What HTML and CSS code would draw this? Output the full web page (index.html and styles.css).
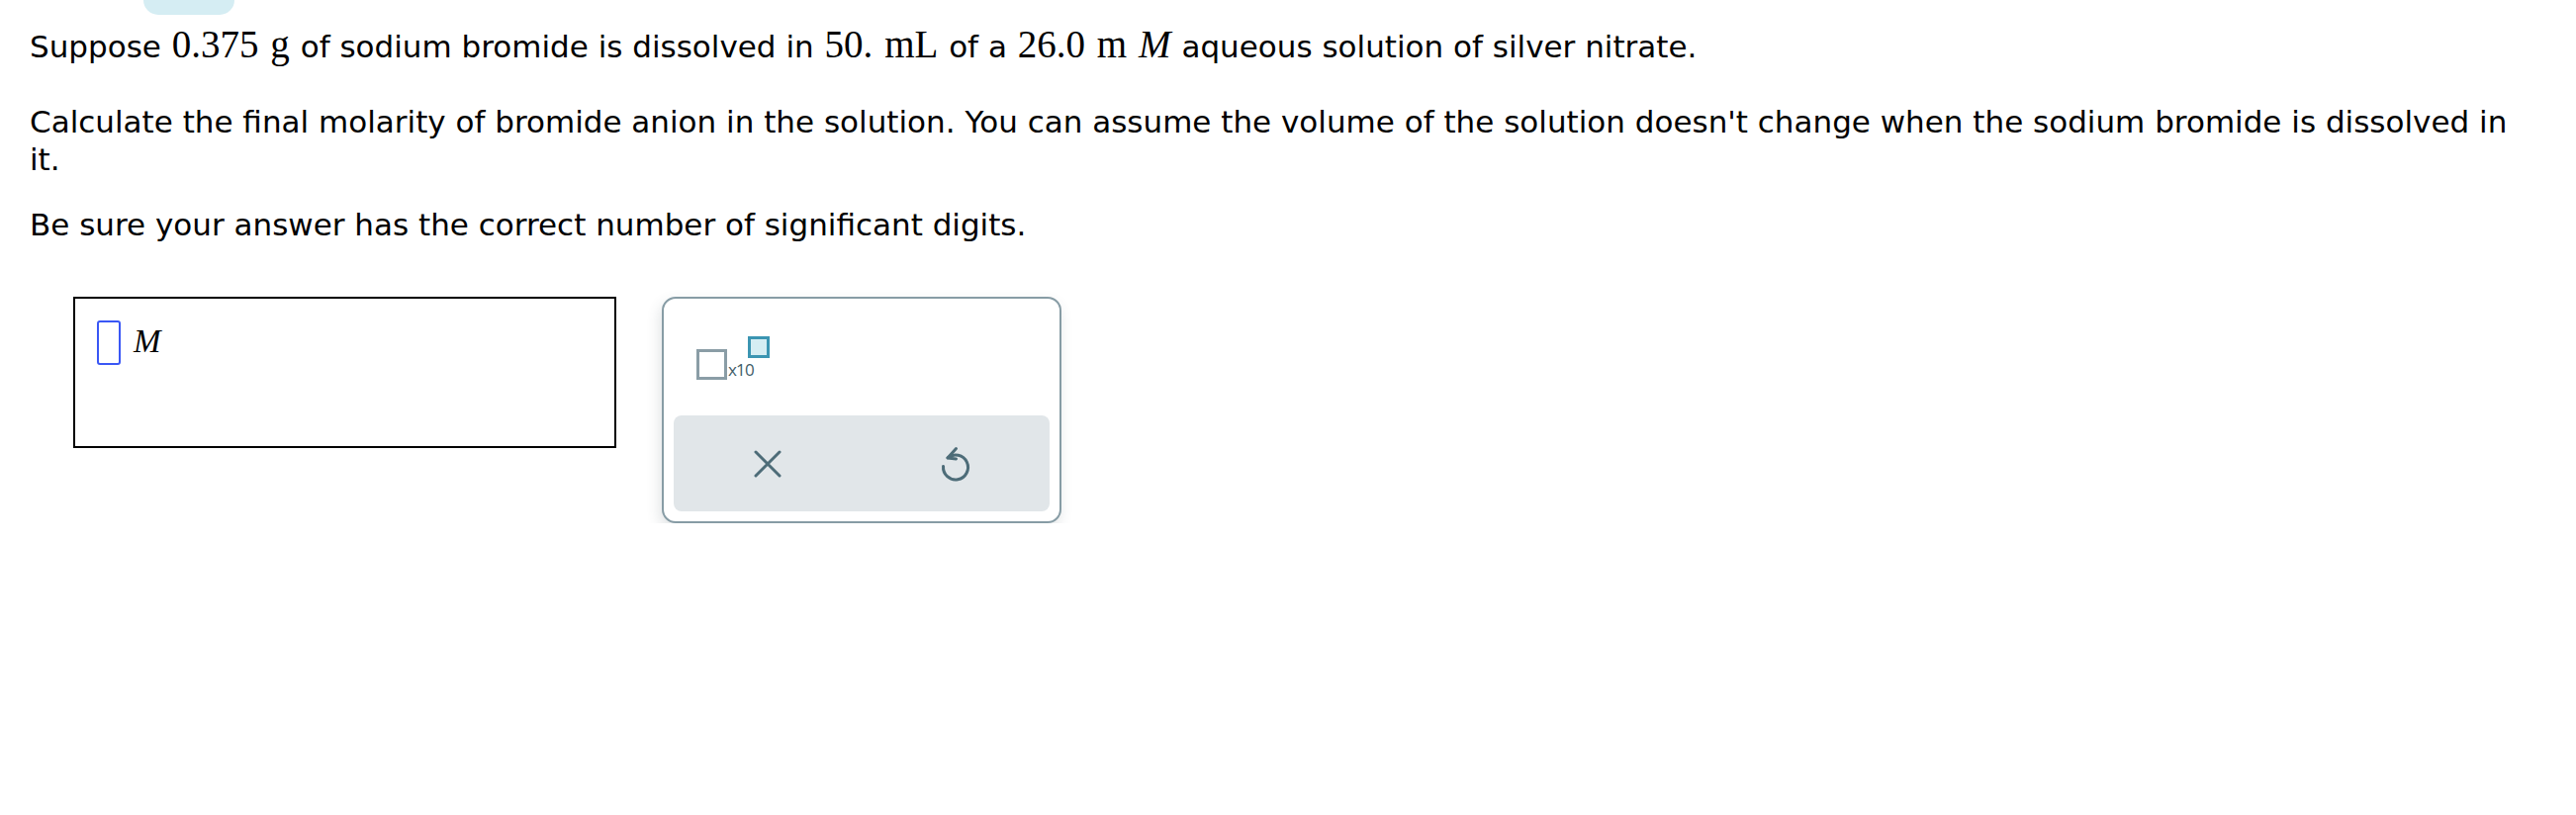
FILE: index.html
```html
<!DOCTYPE html>
<html lang="en">
<head>
<meta charset="utf-8">
<title>Question</title>
<link rel="stylesheet" href="styles.css">
</head>
<body>
<div class="page">
  <div class="tab"></div>
  <div class="question">
    <p class="first">Suppose <span class="math num">0.375</span> <span class="math">g</span> of sodium bromide is dissolved in <span class="math num">50.</span> <span class="math">mL</span> of a <span class="math num">26.0</span> <span class="math">m</span> <span class="math it">M</span> aqueous solution of silver nitrate.</p>
    <p>Calculate the final molarity of bromide anion in the solution. You can assume the volume of the solution doesn't change when the sodium bromide is dissolved in it.</p>
    <p>Be sure your answer has the correct number of significant digits.</p>
  </div>
  <div class="answer-row">
    <div class="answer-box">
      <span class="cursor"></span><span class="unit-var">M</span>
    </div>
    <div class="keypad">
      <div class="keys">
        <button class="sci-key" type="button">
          <span class="sq"></span><span class="x10">x10</span><span class="sup"></span>
        </button>
      </div>
      <div class="actions">
        <button class="act" type="button" aria-label="Clear">
          <svg width="30" height="30" viewBox="0 0 30 30"><path d="M3 3 L27 27 M27 3 L3 27" fill="none" stroke="#4d6c78" stroke-width="3" stroke-linecap="round"/></svg>
        </button>
        <button class="act" type="button" aria-label="Undo">
          <svg width="32" height="38" viewBox="0 0 32 38"><path d="M7.96 12.9 A12.5 12.5 0 1 1 3.55 21.4" fill="none" stroke="#4d6c78" stroke-width="3" stroke-linecap="round"/><path d="M16.5 3.6 L7.96 12.9 L16.5 13.9" fill="none" stroke="#4d6c78" stroke-width="3" stroke-linecap="round" stroke-linejoin="round"/></svg>
        </button>
      </div>
    </div>
  </div>
</div>
</body>
</html>
```
FILE: styles.css
```css
html, body {
  margin: 0;
  padding: 0;
  background: #ffffff;
}

.page {
  font-family: "DejaVu Sans", Verdana, sans-serif;
  font-size: 31px;
  color: #000000;
  padding: 0 50px 0 30px;
}

.tab {
  width: 92px;
  height: 15px;
  margin-left: 115px;
  background: #d5edf3;
  border-radius: 0 0 16px 16px;
}

.question p {
  margin: 0 0 28px 0;
  line-height: 38px;
}

.question p.first {
  margin-top: 11px;
  margin-bottom: 38px;
}

.math {
  font-family: "Liberation Serif", "Times New Roman", serif;
  font-size: 39px;
  margin: 0 1px;
}

.math.it {
  font-style: italic;
}

.answer-row {
  display: flex;
  align-items: flex-start;
  gap: 46px;
  margin-top: 54px;
  padding-left: 44px;
}

.answer-box {
  box-sizing: border-box;
  width: 549px;
  height: 153px;
  border: 2px solid #000000;
  padding: 22px 22px;
  display: flex;
  align-items: flex-start;
  gap: 13px;
}

.cursor {
  box-sizing: border-box;
  width: 24px;
  height: 45px;
  border: 2px solid #3a57f5;
  border-radius: 3px;
}

.unit-var {
  font-family: "Liberation Serif", "Times New Roman", serif;
  font-style: italic;
  font-size: 33px;
  line-height: 1;
  margin-top: 5px;
}

.keypad {
  box-sizing: border-box;
  width: 404px;
  height: 229px;
  border: 2px solid #879ca5;
  border-radius: 14px;
  padding: 10px;
  background: #ffffff;
  box-shadow: -2px 6px 14px rgba(60, 80, 90, 0.16);
  display: flex;
  flex-direction: column;
}

.keys {
  flex: 1;
  display: flex;
  align-items: flex-start;
  padding: 27px 0 0 23px;
}

.sci-key {
  border: 0;
  background: none;
  padding: 0;
  display: flex;
  align-items: flex-end;
  position: relative;
  width: 80px;
  height: 45px;
}

.sq {
  box-sizing: border-box;
  width: 31px;
  height: 31px;
  border: 3px solid #8a9da6;
}

.x10 {
  font-family: "Open Sans", "DejaVu Sans", sans-serif;
  font-size: 17px;
  color: #3f5c68;
  line-height: 1;
  margin-left: 1px;
  margin-bottom: 2px;
  letter-spacing: -0.8px;
}

.sup {
  position: absolute;
  left: 52px;
  top: 1px;
  box-sizing: border-box;
  width: 22px;
  height: 22px;
  border: 3px solid #3b95b2;
  background: #d5edf3;
}

.actions {
  height: 97px;
  background: #e1e6e9;
  border-radius: 8px;
  display: flex;
}

.act {
  flex: 1;
  border: 0;
  background: none;
  padding: 0;
  display: flex;
  align-items: center;
  justify-content: center;
}
```
